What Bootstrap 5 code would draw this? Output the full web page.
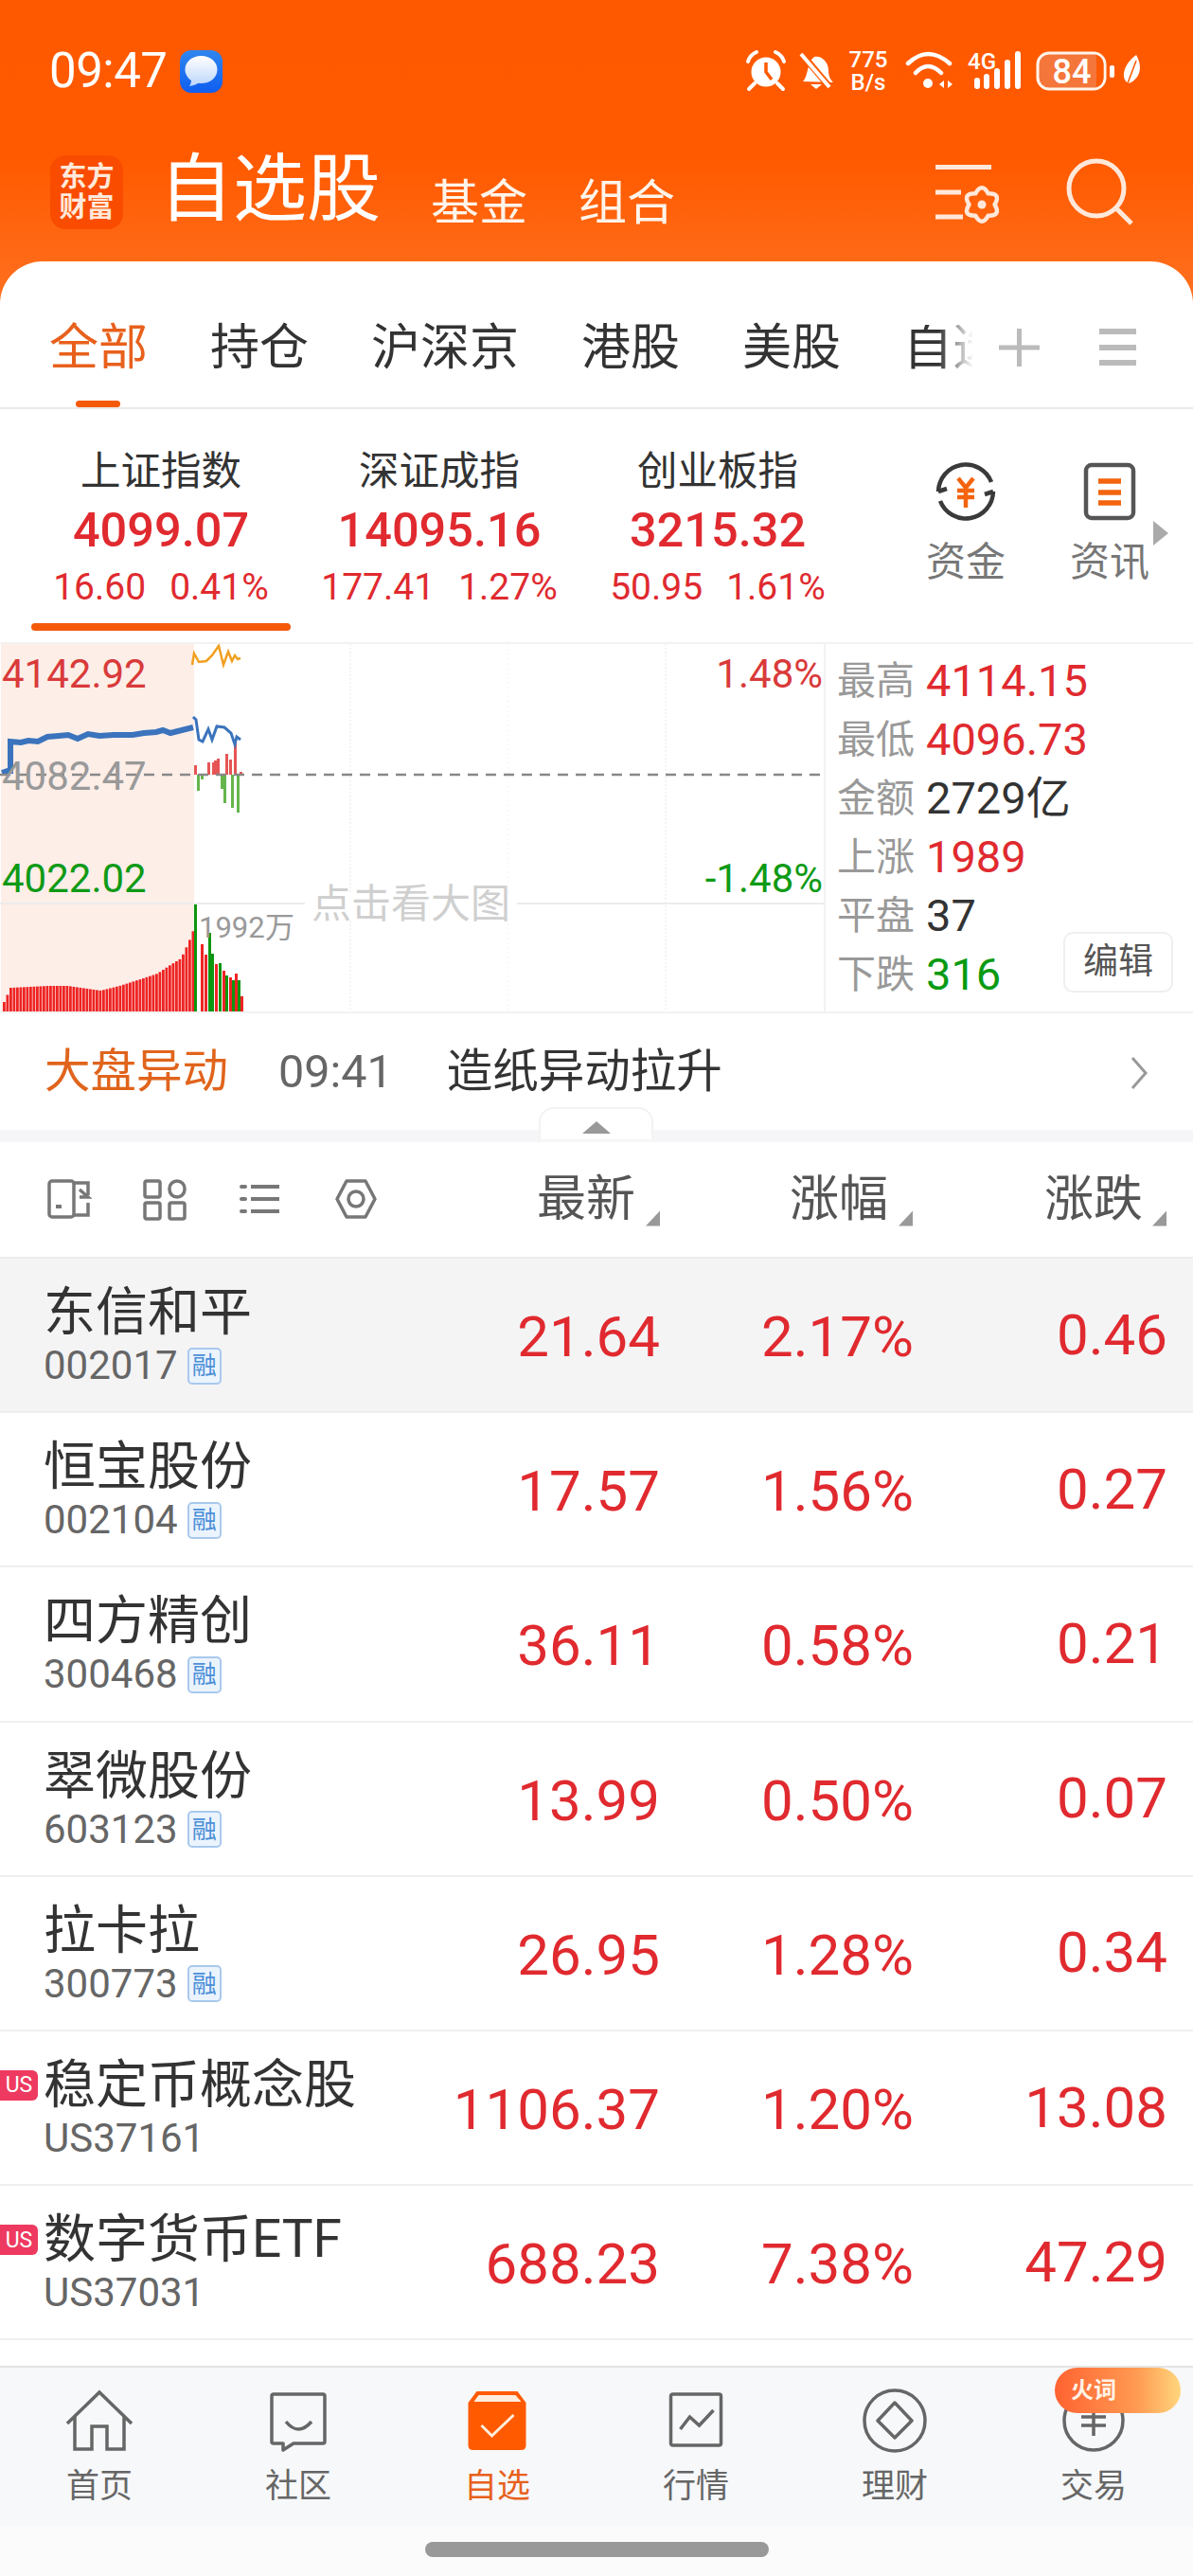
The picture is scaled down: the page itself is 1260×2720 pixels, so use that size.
<!DOCTYPE html>
<html lang="zh-CN">
<head>
<meta charset="UTF-8">
<meta name="viewport" content="width=device-width, initial-scale=1.0">
<title>自选股</title>
<link href="https://cdn.jsdelivr.net/npm/bootstrap@5.3.0/dist/css/bootstrap.min.css" rel="stylesheet">
<style>
html, body { width: 1260px; height: 2720px; overflow: hidden; }
body { font-family: Roboto, "Noto Sans CJK SC", sans-serif; color: #333; background: #fff; }
svg { display: block; flex: none; }
.up { color: #e02a2f; }
.down { color: #0a9a12; }

.screen { width: 1260px; height: 2720px; }
.top-shade { background: linear-gradient(180deg, #ff5900 0, #ff5a00 170px, #ff7222 330px); }
.status-row { height: 150px; padding: 0 52px 0 52px; color: #fff; }
.clock { font-size: 51px; line-height: 50px; letter-spacing: -.5px; }
.bubble { margin-left: 13px; }
.nav-row { height: 126px; padding-left: 53px; color: #fff; }
.app-logo { width: 77px; height: 78px; margin-top: 14px; border-radius: 16px; background: #f94c00; color: #ffe9da; font-size: 29px; font-weight: 700; line-height: 32px; }
.title-main { font-size: 78px; line-height: 74px; margin: 14px 0 0 38px; }
.title-sub { font-size: 51px; line-height: 50px; margin: 40px 0 0 53px; color: #fff4ea; }
.title-sub + .title-sub { margin-left: 54px; }
.nav-tools { margin: 15px 60px 0 auto; }

.tab-panel { height: 156px; padding: 67px 0 0 52px; background: #fff; border-radius: 45px 45px 0 0; border-bottom: 2px solid #e9e9e9; }
.tab-item { font-size: 52px; line-height: 50px; margin-right: 66px; white-space: nowrap; }
.tab-on { color: #e8601c; }
.tab-on::after { content: ""; position: absolute; left: 28px; bottom: -37px; width: 47px; height: 7px; border-radius: 4px; background: #f4590a; }
.tab-fade { width: 74px; margin-right: 27px; overflow: hidden; -webkit-mask-image: linear-gradient(90deg, #000 50%, transparent 100%); mask-image: linear-gradient(90deg, #000 50%, transparent 100%); }
.tab-menu { margin-left: 63px; }

.index-row { height: 248px; padding-left: 23px; border-bottom: 2px solid #f2f2f2; }
.index-col { width: 294px; padding-top: 41px; text-align: center; }
.index-name { font-size: 42.5px; line-height: 50px; }
.index-val { font-size: 50.500px; line-height: 60px; margin-top: 7px; font-weight: 500; }
.index-chg { font-size: 39px; line-height: 40px; margin-top: 10px; gap: 25px; white-space: nowrap; }
.index-line { height: 8px; width: 274px; margin: 18px 0 0 10px; border-radius: 4px; background: #f4590a; }
.quick-col { width: 152px; padding-top: 55px; }
.quick-first { margin-left: 39px; }
.quick-col span { font-size: 42px; line-height: 44px; margin-top: 21px; color: #777; }
.index-arrow { position: absolute; left: 1218px; top: 118px; width: 0; height: 0; border-left: 16px solid #aaa; border-top: 13px solid transparent; border-bottom: 13px solid transparent; }

.chart-row { height: 390px; border-bottom: 2px solid #f2f2f2; }
.chart-side { width: 390px; padding: 8px 0 0 12px; border-left: 2px solid #f2f2f2; }
.side-line { height: 62px; font-size: 47px; line-height: 62px; white-space: nowrap; }
.side-line b { width: 94px; font-size: 41px; font-weight: 400; color: #999; flex: none; }
.edit-btn { width: 116px; height: 64px; margin: -14px 21px 0 auto; border: 2px solid #efefef; border-radius: 10px; font-size: 37px; color: #555; }

.alert-row { height: 123px; padding: 2px 48px 0 47px; font-size: 48.5px; }
.alert-name { color: #e0641c; }
.alert-time { margin-left: 53px; font-size: 48.500px; color: #666; }
.alert-text { margin-left: 57px; }
.gap-strip { height: 13px; background: #f6f6f8; }
.fold-tab { position: absolute; left: 569px; top: -24px; width: 121px; height: 34px; padding-top: 13px; background: #fff; border: 2px solid #f2f2f2; border-bottom: 0; border-radius: 16px 16px 0 0; }
.fold-tab i { display: block; width: 0; height: 0; margin: 0 auto; border-left: 15px solid transparent; border-right: 15px solid transparent; border-bottom: 13px solid #999; }

.head-row { height: 123px; padding-left: 48px; border-bottom: 2px solid #ececec; }
.head-cols { margin-left: 20px; font-size: 52px; color: #555; }
.head-cell { gap: 11px; width: 267px; }
.head-cell:first-child { width: 277px; }
.head-cell:last-child { gap: 10px; width: 268px; }
.sort-mark { width: 15px; height: 16px; margin-top: 40px; background: #999; clip-path: polygon(100% 0, 100% 100%, 0 100%); }

.stock-row { height: 163.2px; padding-left: 46px; border-bottom: 2px solid #efefef; }
.stock-row.picked { background: #f4f4f5; }
.stock-name { width: 374px; padding-top: 26px; }
.stock-name div:first-child { font-size: 55px; line-height: 60px; white-space: nowrap; }
.stock-code { font-size: 42px; line-height: 44px; margin-top: 5px; color: #666; gap: 10px; }
.margin-tag { width: 36px; height: 39px; border: 2px solid #a9c9ed; border-radius: 5px; background: #ebf4fd; color: #4a8fd8; font-size: 26px; line-height: 1; }
.us-tag { position: absolute; left: 0; top: 41px; width: 40px; height: 32px; border-radius: 0 6px 6px 0; background: #ee3a60; color: #fff; font-size: 23px; line-height: 1; }
.stock-val { font-size: 60px; line-height: 70px; text-align: right; color: #e02a2f; margin-top: 5px; }
.val-a { width: 277px; }
.val-b { width: 268px; }
.val-c { width: 268px; margin-top: 0; }
.list-rest { flex: 1; }

.foot-bar { height: 169px; padding-top: 22px; background: #f7f8fa; border-top: 2px solid #e4e4e4; }
.foot-item { width: 210px; font-size: 35px; line-height: 40px; color: #666; }
.foot-item span { margin-top: 14px; }
.foot-item.active { color: #e8601c; }
.hot-tag { position: absolute; right: 13px; top: 0; width: 133px; height: 48px; padding-left: 17px; border-radius: 24px; background: linear-gradient(90deg, #ff6331 0, #ff9a52 65%, #ffd67c 100%); color: #fff3e6; font-size: 24px; font-weight: 700; line-height: 48px; }
.home-bar { height: 53px; padding-top: 17px; background: #fbfbfc; }
.home-pill { width: 363px; height: 16px; border-radius: 8px; background: #999; }
</style>
</head>
<body class="m-0">
<div class="screen d-flex flex-column">

  <div class="top-shade">
    <div class="status-row d-flex align-items-center">
      <span class="clock">09:47</span>
      <svg class="bubble" width="45" height="45" viewBox="0 0 45 45">
        <defs>
          <linearGradient id="bubbleBg" x1="0" y1="0" x2="0" y2="1"><stop offset="0" stop-color="#2f86ee"/><stop offset="1" stop-color="#0f5ef0"/></linearGradient>
          <linearGradient id="bubbleFg" x1="0" y1="0" x2="0" y2="1"><stop offset="0" stop-color="#fff"/><stop offset="1" stop-color="#bcd6fb"/></linearGradient>
        </defs>
        <rect width="45" height="45" rx="12" fill="url(#bubbleBg)"/>
        <path d="M22.5 6C12.5 6 5.5 12.500 5.500 20.500C5.500 26 9 30 12 32C12 34 11 36.500 10 38C13.500 38 17.500 36 19.500 34.800C20.500 35 21.500 35 22.500 35C32 35 39.500 29 39.500 20.500C39.500 12.500 32.500 6 22.500 6Z" fill="url(#bubbleFg)"/>
      </svg>
      <svg class="ms-auto" width="422" height="50" viewBox="786 50 422 50">
        <!-- alarm -->
        <circle cx="809" cy="76" r="15.500" fill="#fff"/>
        <path d="M809 66V76L815 84" fill="none" stroke="#ff5a00" stroke-width="3.500"/>
        <path d="M790 65Q792 58 799 55M828 65Q826 58 819 55M797 88L791 94M821 88L827 94" fill="none" stroke="#fff" stroke-width="4" stroke-linecap="round"/>
        <!-- muted bell -->
        <path d="M848 86C854 80 852 66 860 60C868 58 875 66 875 74C875 80 877 84 880 87Z" fill="#fff"/>
        <path d="M856 89H868L862 94Z" fill="#fff"/>
        <path d="M846 56L878 94" stroke="#ff5a00" stroke-width="7"/>
        <path d="M846 57L876 92" stroke="#fff" stroke-width="4"/>
        <text x="917" y="71" text-anchor="middle" font-family="Roboto" font-size="24" font-weight="500" fill="#fff">775</text>
        <text x="917" y="95" text-anchor="middle" font-family="Roboto" font-size="24" font-weight="500" fill="#fff">B/s</text>
        <!-- wifi -->
        <circle cx="980" cy="88" r="5" fill="#fff"/>
        <path d="M959 67Q980 47 1003 67M967 77Q980 63 994 77" fill="none" stroke="#fff" stroke-width="4.500" stroke-linecap="round"/>
        <path d="M992 89L997 85V93ZM1006 89L1001 85V93Z" fill="#fff"/>
        <!-- signal -->
        <text x="1022" y="73" font-family="Roboto" font-size="24" font-weight="500" fill="#fff">4G</text>
        <path d="M1032 85V91M1042 81V91M1053 75V91M1064 66V91M1075 57V91" stroke="#fff" stroke-width="6" stroke-linecap="round"/>
        <!-- battery -->
        <rect x="1096" y="56" width="71" height="38" rx="12" fill="#f4763a" stroke="#fff5ec" stroke-width="3"/>
        <path d="M1158 57.500H1155C1161 57.500 1165.500 62 1165.500 68V82C1165.500 88 1161 92.500 1155 92.500H1158Z" fill="#ff5a00"/>
        <text x="1132" y="88" text-anchor="middle" font-family="Roboto" font-size="36" font-weight="500" fill="#fff">84</text>
        <rect x="1172" y="69" width="5" height="13" rx="2" fill="#fff"/>
        <!-- leaf -->
        <path d="M1200 58C1208 72 1203 84 1192 88C1183 84 1186 68 1200 58Z" fill="#fff"/>
        <path d="M1200 64L1191 88" stroke="#ff5a00" stroke-width="1.500"/>
      </svg>
    </div>

    <div class="nav-row d-flex align-items-start">
      <div class="app-logo d-flex align-items-center justify-content-center text-center">东方<br>财富</div>
      <div class="title-main">自选股</div>
      <div class="title-sub">基金</div>
      <div class="title-sub">组合</div>
      <svg class="nav-tools" width="215" height="75" viewBox="985 165 215 75" fill="none" stroke="#ffe8da" stroke-width="5">
        <path d="M988 176.500H1047M988 203H1015M988 229H1017"/>
        <path d="M1030.250 204.310Q1037 192 1043.750 204.310Q1057.800 204 1050.500 216Q1057.800 228 1043.750 227.690Q1037 240 1030.250 227.690Q1016.200 228 1023.500 216Q1016.200 204 1030.250 204.310Z" stroke-width="4.500" stroke-linejoin="round"/>
        <circle cx="1037" cy="216" r="4.500" fill="#ffe8da" stroke="none"/>
        <circle cx="1158" cy="199" r="29"/>
        <path d="M1179 220L1195 236"/>
      </svg>
    </div>

    <div class="tab-panel d-flex align-items-start">
      <div class="tab-item tab-on position-relative">全部</div>
      <div class="tab-item">持仓</div>
      <div class="tab-item">沪深京</div>
      <div class="tab-item">港股</div>
      <div class="tab-item">美股</div>
      <div class="tab-item tab-fade">自选</div>
      <svg width="43" height="50" viewBox="0 0 43 50" stroke="#bbb" stroke-width="5"><path d="M0 24H43M21.500 4V44"/></svg>
      <svg class="tab-menu" width="39" height="50" viewBox="0 0 39 50" stroke="#bbb" stroke-width="6"><path d="M0 7H39M0 24H39M0 40H39"/></svg>
    </div>
  </div>

  <div class="index-row d-flex position-relative">
    <div class="index-col">
      <div class="index-name">上证指数</div>
      <div class="index-val up">4099.07</div>
      <div class="index-chg up d-flex justify-content-center"><span>16.60</span><span>0.41%</span></div>
      <div class="index-line"></div>
    </div>
    <div class="index-col">
      <div class="index-name">深证成指</div>
      <div class="index-val up">14095.16</div>
      <div class="index-chg up d-flex justify-content-center"><span>177.41</span><span>1.27%</span></div>
    </div>
    <div class="index-col">
      <div class="index-name">创业板指</div>
      <div class="index-val up">3215.32</div>
      <div class="index-chg up d-flex justify-content-center"><span>50.95</span><span>1.61%</span></div>
    </div>
    <div class="quick-col quick-first d-flex flex-column align-items-center">
      <svg width="64" height="64" viewBox="0 0 64 64" fill="none">
        <path d="M3 32A29 29 0 0 1 59 22M61 32A29 29 0 0 1 5 42" stroke="#3a3a3a" stroke-width="4.500"/>
        <path d="M3 32L12 29M61 32L52 35" stroke="#3a3a3a" stroke-width="4.500"/>
        <path d="M24 18L32 28L40 18M23 31H41M23 38H41M32 28V49" stroke="#f4640f" stroke-width="4.500"/>
      </svg>
      <span>资金</span>
    </div>
    <div class="quick-col d-flex flex-column align-items-center">
      <svg width="56" height="64" viewBox="0 0 56 64" fill="none">
        <rect x="3" y="4" width="50" height="56" rx="6" stroke="#555" stroke-width="4.500"/>
        <path d="M16 21H40M16 33H40M16 44H40" stroke="#f4640f" stroke-width="5.500"/>
      </svg>
      <span>资讯</span>
    </div>
    <div class="index-arrow"></div>
  </div>

  <div class="chart-row d-flex">
    <svg width="870" height="388" viewBox="0 0 870 388" font-family="Roboto" font-size="42">
      <rect x="1" y="0" width="204" height="388" fill="#fdeee8"/>
      <path d="M370 0V388M703 0V388" stroke="#f1f1f1" stroke-width="1.500" stroke-dasharray="2 2"/>
      <path d="M537 0V388" stroke="#f7f7f7" stroke-width="1.500" stroke-dasharray="2 3"/>
      <path d="M0 274H870" stroke="#ececec" stroke-width="2"/>
      <g id="volumeBars"></g>
      <g id="diffBars"></g>
      <path d="M203 22L205 10L210 19L218 18L224 12L231 2L236 22L241 8L245 18L248 12L251 16L254 15" fill="none" stroke="#f0a020" stroke-width="2.500"/>
      <path d="M2 136L8 134L11 134V103L22 104L30 102L40 103L50 98L62 97L72 96L82 100L93 95L105 97L120 96L140 96L152 94L165 93L172 91L180 94L192 91L204 88" fill="none" stroke="#3b73bd" stroke-width="6"/>
      <path d="M204 77L207 80L210 101L214 103L220 90L224 101L229 87L237 88L244 94L248 106L250 98L254 101" fill="none" stroke="#3b73bd" stroke-width="3"/>
      <path d="M0 138H870" stroke="#888" stroke-width="2.500" stroke-dasharray="11 8"/>
      <text x="2" y="46" fill="#d93a3a">4142.92</text>
      <text x="2" y="154" fill="#999">4082.47</text>
      <text x="2" y="262" fill="#0f9a16">4022.02</text>
      <text x="869" y="46" text-anchor="end" fill="#d93a3a">1.48%</text>
      <text x="869" y="262" text-anchor="end" fill="#0f9a16">-1.48%</text>
      <text x="210" y="310" font-size="31" fill="#999">1992万</text>
      <rect x="322" y="262" width="224" height="28" fill="#fff"/>
      <text x="329" y="289" font-family="Noto Sans CJK SC" fill="#cfcfcf">点击看大图</text>
    </svg>
    <div class="chart-side">
      <div class="side-line d-flex"><b>最高</b><span class="up">4114.15</span></div>
      <div class="side-line d-flex"><b>最低</b><span class="up">4096.73</span></div>
      <div class="side-line d-flex"><b>金额</b><span>2729亿</span></div>
      <div class="side-line d-flex"><b>上涨</b><span class="up">1989</span></div>
      <div class="side-line d-flex"><b>平盘</b><span>37</span></div>
      <div class="side-line d-flex">
        <b>下跌</b><span class="down">316</span>
        <button class="edit-btn btn p-0 d-flex align-items-center justify-content-center">编辑</button>
      </div>
    </div>
  </div>

  <div class="alert-row d-flex align-items-center">
    <span class="alert-name">大盘异动</span>
    <span class="alert-time">09:41</span>
    <span class="alert-text">造纸异动拉升</span>
    <svg class="ms-auto" width="18" height="34" viewBox="0 0 18 34" fill="none" stroke="#999" stroke-width="3"><path d="M2 1L16 17L2 33"/></svg>
  </div>
  <div class="gap-strip position-relative"><div class="fold-tab"><i></i></div></div>

  <div class="head-row d-flex align-items-center">
    <svg width="352" height="48" viewBox="48 1243 352 48" fill="none" stroke="#777" stroke-width="3.500">
      <rect x="52" y="1247" width="26" height="38" rx="3"/>
      <path d="M78 1249H93V1262M93 1270V1283H78M84 1256L93 1264L84 1264"/>
      <path d="M59 1274H65" stroke-width="4"/>
      <rect x="153" y="1247" width="16" height="17" rx="2"/>
      <rect x="179" y="1247" width="16" height="17" rx="8"/>
      <rect x="153" y="1270" width="16" height="17" rx="2"/>
      <rect x="179" y="1270" width="16" height="17" rx="2"/>
      <path d="M265 1253H295M265 1266H295M265 1279H295" stroke-width="4"/>
      <path d="M255 1253H259M255 1266H259M255 1279H259" stroke-width="4" stroke-linecap="round"/>
      <path d="M356 1266L366 1247H386L396 1266L386 1285H366Z" stroke-linejoin="round"/>
      <circle cx="376" cy="1266" r="8"/>
    </svg>
    <div class="head-cols d-flex">
      <div class="head-cell d-flex align-items-center justify-content-end"><span>最新</span><i class="sort-mark"></i></div>
      <div class="head-cell d-flex align-items-center justify-content-end"><span>涨幅</span><i class="sort-mark"></i></div>
      <div class="head-cell d-flex align-items-center justify-content-end"><span>涨跌</span><i class="sort-mark"></i></div>
    </div>
  </div>

  <div id="stockList"></div>
  <div class="list-rest"></div>

  <div class="foot-bar d-flex position-relative">
    <div class="foot-item d-flex flex-column align-items-center">
      <svg width="70" height="70" viewBox="0 -3 70 70" fill="none" stroke="#666" stroke-width="3.500"><path d="M1 34L35 1L69 34M9 26V61H27V37H43V61H61V26"/></svg>
      <span>首页</span>
    </div>
    <div class="foot-item d-flex flex-column align-items-center">
      <svg width="70" height="70" viewBox="-5 -4 70 70" fill="none" stroke="#666" stroke-width="3.500" stroke-linejoin="round"><path d="M4 2H56Q58 2 58 4V52Q58 54 56 54H25L14 61V54H4Q2 54 2 52V4Q2 2 4 2Z"/><path d="M17 31Q30 47 44 31"/></svg>
      <span>社区</span>
    </div>
    <div class="foot-item active d-flex flex-column align-items-center">
      <svg width="70" height="70" viewBox="-4.500 -3 70 70"><path d="M9 0H52L61 12V57Q61 62 56 62H5Q0 62 0 57V12Z" fill="#ff5a00"/><path d="M11 4H50L56 11H6Z" fill="#ffeede"/><path d="M14 36L25 47L48 25" fill="none" stroke="#ffeede" stroke-width="3"/></svg>
      <span>自选</span>
    </div>
    <div class="foot-item d-flex flex-column align-items-center">
      <svg width="70" height="70" viewBox="-6.500 -4 70 70" fill="none" stroke="#666" stroke-width="3.500"><rect x="2" y="2" width="53" height="54" rx="2"/><path d="M12 39L22 26L32 35L47 19"/></svg>
      <span>行情</span>
    </div>
    <div class="foot-item d-flex flex-column align-items-center">
      <svg width="70" height="70" viewBox="-1 0 70 70" fill="none" stroke="#666" stroke-width="3.500" stroke-linejoin="round"><circle cx="34" cy="34" r="32"/><path d="M34 15L52 34L34 52L16 34Z"/></svg>
      <span>理财</span>
    </div>
    <div class="foot-item d-flex flex-column align-items-center">
      <svg width="70" height="70" viewBox="0 0 70 70" fill="none" stroke="#666" stroke-width="3.500"><circle cx="35" cy="34" r="31"/><path d="M22 30H48M22 39H48M35 22V50"/></svg>
      <span>交易</span>
    </div>
    <div class="hot-tag">火词</div>
  </div>
  <div class="home-bar d-flex justify-content-center"><div class="home-pill"></div></div>
</div>

<script src="https://cdn.jsdelivr.net/npm/bootstrap@5.3.0/dist/js/bootstrap.bundle.min.js"></script>
<script>
    const stocks = [
        ['东信和平', '002017', '21.64', '2.17%', '0.46', 'rz'],
        ['恒宝股份', '002104', '17.57', '1.56%', '0.27', 'rz'],
        ['四方精创', '300468', '36.11', '0.58%', '0.21', 'rz'],
        ['翠微股份', '603123', '13.99', '0.50%', '0.07', 'rz'],
        ['拉卡拉', '300773', '26.95', '1.28%', '0.34', 'rz'],
        ['稳定币概念股', 'US37161', '1106.37', '1.20%', '13.08', 'us'],
        ['数字货币ETF', 'US37031', '688.23', '7.38%', '47.29', 'us']
    ];

    document.getElementById('stockList').innerHTML = stocks.map((s, i) => `
        <div class="stock-row d-flex align-items-center position-relative ${i === 0 ? 'picked' : ''}">
            ${s[5] === 'us' ? '<div class="us-tag d-flex align-items-center justify-content-center">US</div>' : ''}
            <div class="stock-name align-self-start">
                <div>${s[0]}</div>
                <div class="stock-code d-flex align-items-center">${s[1]}${s[5] === 'rz' ? '<span class="margin-tag d-flex align-items-center justify-content-center">融</span>' : ''}</div>
            </div>
            <div class="stock-val val-a">${s[2]}</div>
            <div class="stock-val val-b">${s[3]}</div>
            <div class="stock-val val-c">${s[4]}</div>
        </div>`).join('');

    // volume bars: top edge is read off the picture, y is relative to the chart
    const base = 388;
    const preOpen = [[3, 378], [10, 363], [50, 361], [70, 361], [105, 366], [125, 361], [150, 353], [165, 348], [180, 338], [190, 332], [198, 315], [203, 302]];
    function topAt(x) {
        for (let i = 1; i < preOpen.length; i++) {
            if (x <= preOpen[i][0]) {
                const a = preOpen[i - 1], b = preOpen[i];
                return a[1] + (b[1] - a[1]) * (x - a[0]) / (b[0] - a[0]);
            }
        }
        return preOpen[preOpen.length - 1][1];
    }
    let bars = '';
    for (let x = 3; x < 204; x += 3.5) {
        const t = topAt(x);
        bars += `<rect x="${x}" y="${t}" width="2.800" height="${base - t}" fill="#ee2424"/>`;
    }
    const openBars = [[205, 275, 'g'], [212, 317, 'r'], [216, 328, 'r'], [220, 305, 'g'], [223, 327, 'g'], [227, 338, 'r'], [231, 337, 'g'], [235, 345, 'r'], [238, 350, 'g'], [242, 352, 'r'], [245, 355, 'g'], [248, 348, 'r'], [251, 355, 'g'], [254, 372, 'r']];
    openBars.forEach(b => {
        bars += `<rect x="${b[0]}" y="${b[1]}" width="3" height="${base - b[1]}" fill="${b[2] === 'g' ? '#0d960f' : '#ee2424'}"/>`;
    });
    document.getElementById('volumeBars').innerHTML = bars;

    // small up/down bars around the zero line
    const zero = 138;
    const diffUp = [[205, 128], [219, 125], [224, 125], [226, 123], [229, 121], [238, 116], [242, 122], [247, 103], [253, 135]];
    const diffDown = [[208, 155], [212, 143], [233, 153], [236, 168], [244, 173], [250, 178]];
    let diff = '';
    diffUp.forEach(d => { diff += `<rect x="${d[0]}" y="${d[1]}" width="3" height="${zero - d[1]}" fill="#e65555"/>`; });
    diffDown.forEach(d => { diff += `<rect x="${d[0]}" y="${zero}" width="3" height="${d[1] - zero}" fill="#66b54c"/>`; });
    document.getElementById('diffBars').innerHTML = diff;
</script>
</body>
</html>
